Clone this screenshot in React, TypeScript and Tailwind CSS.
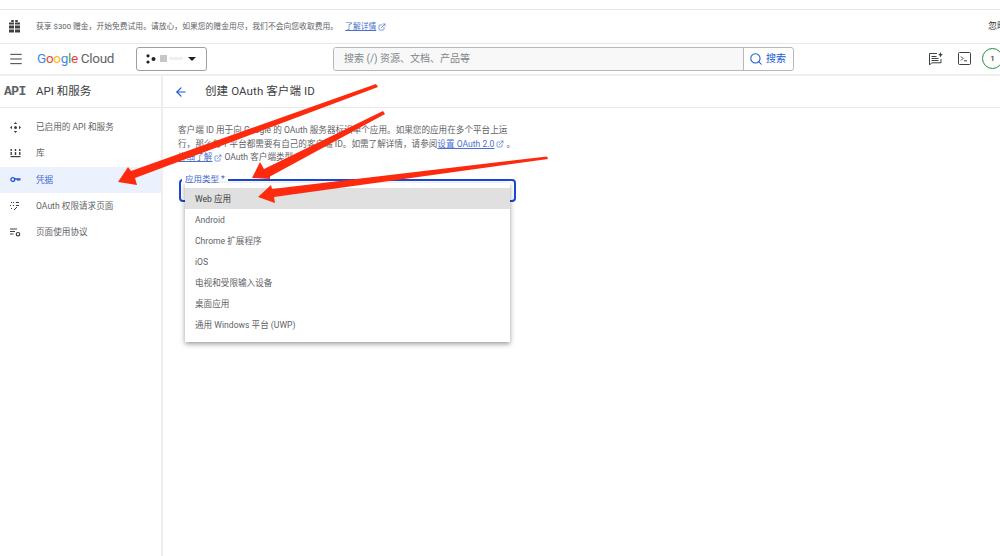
import React from 'react';
import { ArrowLeft, ExternalLink, Menu, Search } from 'lucide-react';

const cjk = "font-['Roboto','Noto_Sans_CJK_SC',sans-serif]";

const GiftIcon = () => (
  <svg width="13" height="13" viewBox="0 0 13 13" fill="#3c4043">
    <rect x="3" y="0" width="3" height="2" rx="1" />
    <rect x="7" y="0" width="3" height="2" rx="1" />
    <rect x="1" y="2.5" width="5" height="2" />
    <rect x="7" y="2.5" width="5" height="2" />
    <rect x="1" y="5.5" width="5" height="3" />
    <rect x="7" y="5.5" width="5" height="3" />
    <rect x="1" y="9.5" width="5" height="3" />
    <rect x="7" y="9.5" width="5" height="3" />
  </svg>
);

const ProjectIcon = () => (
  <svg width="10" height="10" viewBox="0 0 10 10" fill="#202124">
    <circle cx="2" cy="1.8" r="1.6" />
    <circle cx="2" cy="8" r="1.6" />
    <circle cx="7.5" cy="5" r="2" />
  </svg>
);

const FeedbackIcon = () => (
  <svg width="15" height="14" viewBox="0 0 15 14" fill="none" stroke="#3c4043" strokeWidth="1">
    <path d="M9 1.5H1.5v11.5l2.2-2.2H13V7" />
    <path d="M3.5 4.5h5M3.5 6.5h7M3.5 8.5h7" />
    <path d="M12.5 0l.8 2 1.7.8-1.7.8-.8 2-.8-2-1.7-.8 1.7-.8z" fill="#3c4043" stroke="none" />
  </svg>
);

const TerminalIcon = () => (
  <svg width="13" height="13" viewBox="0 0 13 13" fill="none" stroke="#3c4043" strokeWidth="1">
    <rect x="0.5" y="0.5" width="12" height="12" rx="1" />
    <path d="M3 4.5l2 2-2 2M6 8.8h3" />
  </svg>
);

const MoveIcon = () => (
  <svg width="11" height="11" viewBox="0 0 11 11" fill="#3c4043">
    <path d="M5.5 0l1.7 2H3.8zM5.5 11l1.7-2H3.8zM0 5.5l2-1.7v3.4zM11 5.5l-2-1.7v3.4z" />
    <circle cx="5.5" cy="5.5" r="1.5" />
  </svg>
);

const LibraryIcon = () => (
  <svg width="11" height="10" viewBox="0 0 11 10" fill="#3c4043">
    <rect x="0.5" y="0" width="1.4" height="2" />
    <rect x="4.8" y="0" width="1.4" height="2" />
    <rect x="9.1" y="0" width="1.4" height="2" />
    <rect x="0.5" y="3" width="1.4" height="3" />
    <rect x="4.8" y="3" width="1.4" height="3" />
    <rect x="9.1" y="3" width="1.4" height="3" />
    <rect x="0.5" y="7" width="10" height="1.2" />
  </svg>
);

const KeyIcon = () => (
  <svg width="11" height="7" viewBox="0 0 11 7" fill="none" stroke="#1a56d6" strokeWidth="1.3">
    <circle cx="2.8" cy="3.5" r="1.9" />
    <path d="M4.8 3h5.7M8 3v2M9.8 3v1.5" />
  </svg>
);

const ConsentIcon = () => (
  <svg width="10" height="10" viewBox="0 0 10 10" fill="#3c4043">
    <path d="M1 1h1v1H1zM3 1h1v1H3zM6 1h3v1H6zM0 4h1v1H0zM3 4h1v1H3zM6 4h3v1H6zM1 7h1v1H1zM4 8h1v1H4zM6 6h1v1H6zM5 7h1v1H5z" />
  </svg>
);

const TermsIcon = () => (
  <svg width="11" height="9" viewBox="0 0 11 9" fill="none" stroke="#3c4043" strokeWidth="1">
    <path d="M0 1h7M0 3.5h5M0 6h3.5" />
    <circle cx="8" cy="6.2" r="1.7" strokeWidth="1.2" />
  </svg>
);

const navItems = [
  { icon: <MoveIcon />, label: '已启用的 API 和服务' },
  { icon: <LibraryIcon />, label: '库' },
  { icon: <KeyIcon />, label: '凭据', active: true },
  { icon: <ConsentIcon />, label: 'OAuth 权限请求页面' },
  { icon: <TermsIcon />, label: '页面使用协议' },
];

const appTypes = ['Web 应用', 'Android', 'Chrome 扩展程序', 'iOS', '电视和受限输入设备', '桌面应用', '通用 Windows 平台 (UWP)'];

const App: React.FC = () => {
  return (
    <div className={`relative h-[556px] w-[1000px] overflow-hidden bg-white text-[8.6px] text-[#5f6368] ${cjk}`}>
      <div className="box-content h-[9px] border-b border-[#e8e8e8]" />

      {/* free trial banner */}
      <div className="flex h-[34px] items-center border-b border-[#e8e8e8] pl-[8px] text-[7.8px]">
        <GiftIcon />
        <span className="ml-[15px]">获享 $300 赠金，开始免费试用。请放心，如果您的赠金用尽，我们不会向您收取费用。</span>
        <a className="ml-[7px] flex items-center gap-[2px] text-[#4a6fd0] underline">
          了解详情
          <ExternalLink size={8} />
        </a>
        <span className="ml-auto w-[12px] overflow-hidden whitespace-nowrap text-[9px] text-[#3c4043]">忽略</span>
      </div>

      {/* top bar */}
      <div className="flex h-[32px] items-center border-b-2 border-[#eeeeee] pb-[1px]">
        <Menu size={16} strokeWidth={1.5} className="ml-[8px] shrink-0 text-[#3c4043]" />
        <div className="ml-[13px] flex w-[78px] shrink-0 items-baseline font-['Roboto',sans-serif] text-[13.5px] tracking-[-0.3px]">
          <span className="text-[#4285f4]">G</span>
          <span className="text-[#ea4335]">o</span>
          <span className="text-[#fbbc05]">o</span>
          <span className="text-[#4285f4]">g</span>
          <span className="text-[#34a853]">l</span>
          <span className="text-[#ea4335]">e</span>
          <span className="ml-[3px] text-[#5f6368]">Cloud</span>
        </div>
        <div className="ml-[21px] flex h-[24px] w-[71px] shrink-0 items-center rounded-[3px] border border-[#9aa0a6] pl-[9px]">
          <ProjectIcon />
          <span className="ml-[4px] h-[7px] w-[7px] bg-[#c4c6c9]" />
          <span className="ml-[2px] h-[3px] w-[14px] bg-[#f0f0f0]" />
          <span className="ml-[5px] h-0 w-0 border-x-[4px] border-t-[4px] border-x-transparent border-t-[#202124]" />
        </div>
        <div className="ml-[126px] flex h-[24px] w-[461px] shrink-0 rounded-[3px] border border-[#b5b8bc]">
          <div className="flex flex-1 items-center rounded-l-[3px] bg-[#f8f8f8] pl-[10px] text-[10px] text-[#80868b]">
            搜索 (/) 资源、文档、产品等
          </div>
          <div className="flex w-[50px] items-center justify-center gap-[3px] border-l border-[#b5b8bc] pr-[2px] text-[10px] text-[#1a56d6]">
            <Search size={14} strokeWidth={1.8} />
            搜索
          </div>
        </div>
        <div className="ml-[134px] flex shrink-0 items-center">
          <FeedbackIcon />
          <span className="ml-[15px] flex"><TerminalIcon /></span>
          <div className="ml-[11px] flex h-[21px] w-[21px] shrink-0 items-center justify-center rounded-full border-[1.5px] border-[#1e8e3e] text-[8px] font-medium text-[#3c4043]">
            1
          </div>
        </div>
      </div>

      <div className="flex h-[480px]">
        {/* sidebar */}
        <aside className="w-[163px] shrink-0 border-r-2 border-[#eeeeee]">
          <div className="flex h-[32px] items-center border-b border-[#e8e8e8] pl-[4px]">
            <span className="font-['Liberation_Mono',monospace] text-[13px] font-bold leading-none tracking-[-0.5px] text-[#5f6368]">API</span>
            <span className="ml-[10px] text-[11.5px] text-[#3c4043]">API 和服务</span>
          </div>
          <nav className="pt-[6px]">
            {navItems.map((item, index) => (
              <div
                key={index}
                className={`flex h-[26.4px] items-center ${item.active ? 'bg-[#ecf2fd] text-[#3f68cf]' : ''}`}
              >
                <span className="flex w-[36px] justify-center pr-[6px]">{item.icon}</span>
                {item.label}
              </div>
            ))}
          </nav>
        </aside>

        {/* main panel */}
        <main className="min-w-0 flex-1">
          <div className="flex h-[32px] items-center border-b border-[#e8e8e8] pl-[11px]">
            <ArrowLeft size={14} strokeWidth={2} className="text-[#1a56d6]" />
            <span className="ml-[17px] text-[11.5px] tracking-[0.1px] text-[#3c4043]">创建 OAuth 客户端 ID</span>
          </div>
          <div className="pl-[15px] pt-[16px] leading-[13.5px]">
            <p className="w-[342px]">
              客户端 ID 用于向 Google 的 OAuth 服务器标识单个应用。如果您的应用在多个平台上运行，那么每个平台都需要有自己的客户端 ID。如需了解详情，请参阅
              <a className="text-[#4a6fd0] underline">设置 OAuth 2.0</a>
              <ExternalLink size={8} className="mx-[2px] inline text-[#4a6fd0]" />
              。
              <br />
              <a className="text-[#4a6fd0] underline">详细了解</a>
              <ExternalLink size={8} className="mx-[2px] inline text-[#4a6fd0]" />
              OAuth 客户端类型。
            </p>
            <div className="relative ml-[1px] mt-[14px] h-[23px] w-[337px] rounded-[4px] border-2 border-[#1a47d6]">
              <span className="absolute -top-[7px] left-[1px] bg-white px-[3px] text-[8.5px] leading-[10px] text-[#3f68cf]">应用类型 *</span>
            </div>
          </div>
        </main>
      </div>

      {/* open select dropdown */}
      <ul className="absolute left-[185px] top-[183px] w-[325px] bg-white pb-[6px] pt-[5px] shadow-[0_2px_5px_rgba(0,0,0,0.4)]">
        {appTypes.map((type, index) => (
          <li key={index} className={`flex h-[21.1px] items-center pl-[10px] pt-[1px] ${index === 0 ? 'bg-[#e0e0e0] text-[#3c4043]' : ''}`}>
            {type}
          </li>
        ))}
      </ul>

      {/* red annotation arrows */}
      <svg className="absolute left-0 top-0" width="1000" height="556" fill="#fe2a0e">
        <path d="M376 84L378 87L135 178L137 185L118 182L128 167L131 171Z" />
        <path d="M383 111L385 114L270 176.5L270 179L252 178L260 162L264 169Z" />
        <path d="M547 156.5L548 159L274 197L275 203L258 197L271 185L272 189Z" />
      </svg>
    </div>
  );
};

export default App;
